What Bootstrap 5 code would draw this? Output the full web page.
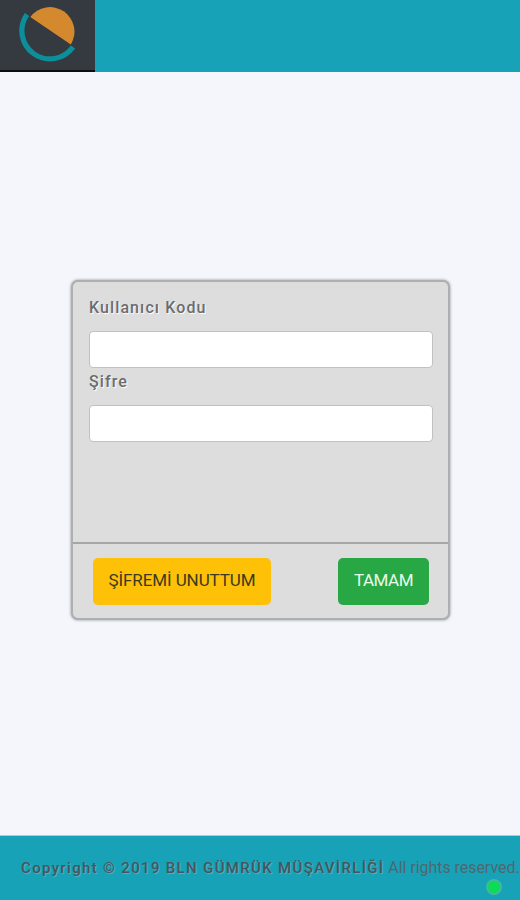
<!DOCTYPE html>
<html lang="tr">
<head>
<meta charset="utf-8">
<meta name="viewport" content="width=device-width, initial-scale=1">
<title>BLN Gümrük Müşavirliği</title>
<link href="https://cdn.jsdelivr.net/npm/bootstrap@5.3.0/dist/css/bootstrap.min.css" rel="stylesheet">
<style>
body{font-family:Roboto,"Liberation Sans",sans-serif;font-size:16px;background:#f4f6fb;color:#666}
.topbar{height:72px;background:#17a2b8}
.brand-box{width:95px;background:#343a40;border-bottom:2px solid #0c0e10}
.login-box{width:379px;height:340px;margin:0 0 7px 1px;background:#ddd;border:2px solid #adafb2;border-radius:7px;box-shadow:0 0 3px #8b8e92}
.login-body{height:262px;padding:14px 15px 0 16px;border-bottom:2px solid #a4a6a8}
.login-label{display:block;height:24px;line-height:24px;letter-spacing:1.1px;font-weight:500;font-size:16px;color:#6c6c6c;text-shadow:1px 1px 1px #fff}
.login-input{height:37px;margin:11px 0 2px;padding:6px 12px;border:1px solid #bfc1c3;border-radius:4px;background:#fff}
.login-foot{padding:14px 19px 0 20px}
.login-btn{height:47px;padding:0 0 2px;border:0;border-radius:5px;font-size:17px;line-height:45px;white-space:nowrap}
.btn-forgot,.btn-forgot:hover{width:178px;background:#ffc107;color:#3b3a20}
.btn-ok,.btn-ok:hover{width:91px;background:#28a745;color:#e9fbe9}
.forgot-text{letter-spacing:-.1px}
.ok-text{letter-spacing:-.5px}
.bottombar{height:65px;background:#17a2b8;border-top:1px solid #9ed0dd;padding:20px 0 0 21px;color:#4f6870;white-space:nowrap;line-height:24px}
.copy-strong{font-size:15px;font-weight:500;letter-spacing:1.34px;color:#48565c;text-shadow:1px 1px 1px #57b1bf}
.copy-rest{letter-spacing:-.05px}
.status-dot{right:18px;bottom:5px;width:16px;height:16px;background:#09dc55;border:2px solid #43b99a}
</style>
</head>
<body>
<div class="d-flex flex-column vh-100 overflow-hidden position-relative">
<header class="topbar d-flex flex-shrink-0">
<a class="brand-box d-block" href="#" aria-label="BLN">
<svg class="d-block" width="95" height="70" viewBox="0 0 95 70"><path d="M30.3 17A24.5 24.5 0 0 1 70.8 44.5Z" fill="#d5892e"/><path d="M27 14.5A27.9 27.9 0 0 0 73 47" fill="none" stroke="#0d8f9b" stroke-width="5.2"/></svg>
</a>
</header>
<main class="flex-grow-1 d-flex align-items-center justify-content-center">
<form class="login-box">
<div class="login-body">
<label class="login-label" for="user"><span>Kullanıcı Kodu</span></label>
<input class="login-input d-block w-100" id="user" type="text">
<label class="login-label" for="pass"><span>Şifre</span></label>
<input class="login-input d-block w-100" id="pass" type="password">
</div>
<div class="login-foot d-flex justify-content-between">
<button class="btn login-btn btn-forgot" type="button"><span class="forgot-text">ŞİFREMİ UNUTTUM</span></button>
<button class="btn login-btn btn-ok" type="button"><span class="ok-text">TAMAM</span></button>
</div>
</form>
</main>
<footer class="bottombar flex-shrink-0"><span class="copy-strong">Copyright © 2019 BLN GÜMRÜK MÜŞAVİRLİĞİ</span> <span class="copy-rest">All rights reserved.</span></footer>
<span class="status-dot position-absolute rounded-circle"></span>
</div>
<script src="https://cdn.jsdelivr.net/npm/bootstrap@5.3.0/dist/js/bootstrap.bundle.min.js"></script>
</body>
</html>
